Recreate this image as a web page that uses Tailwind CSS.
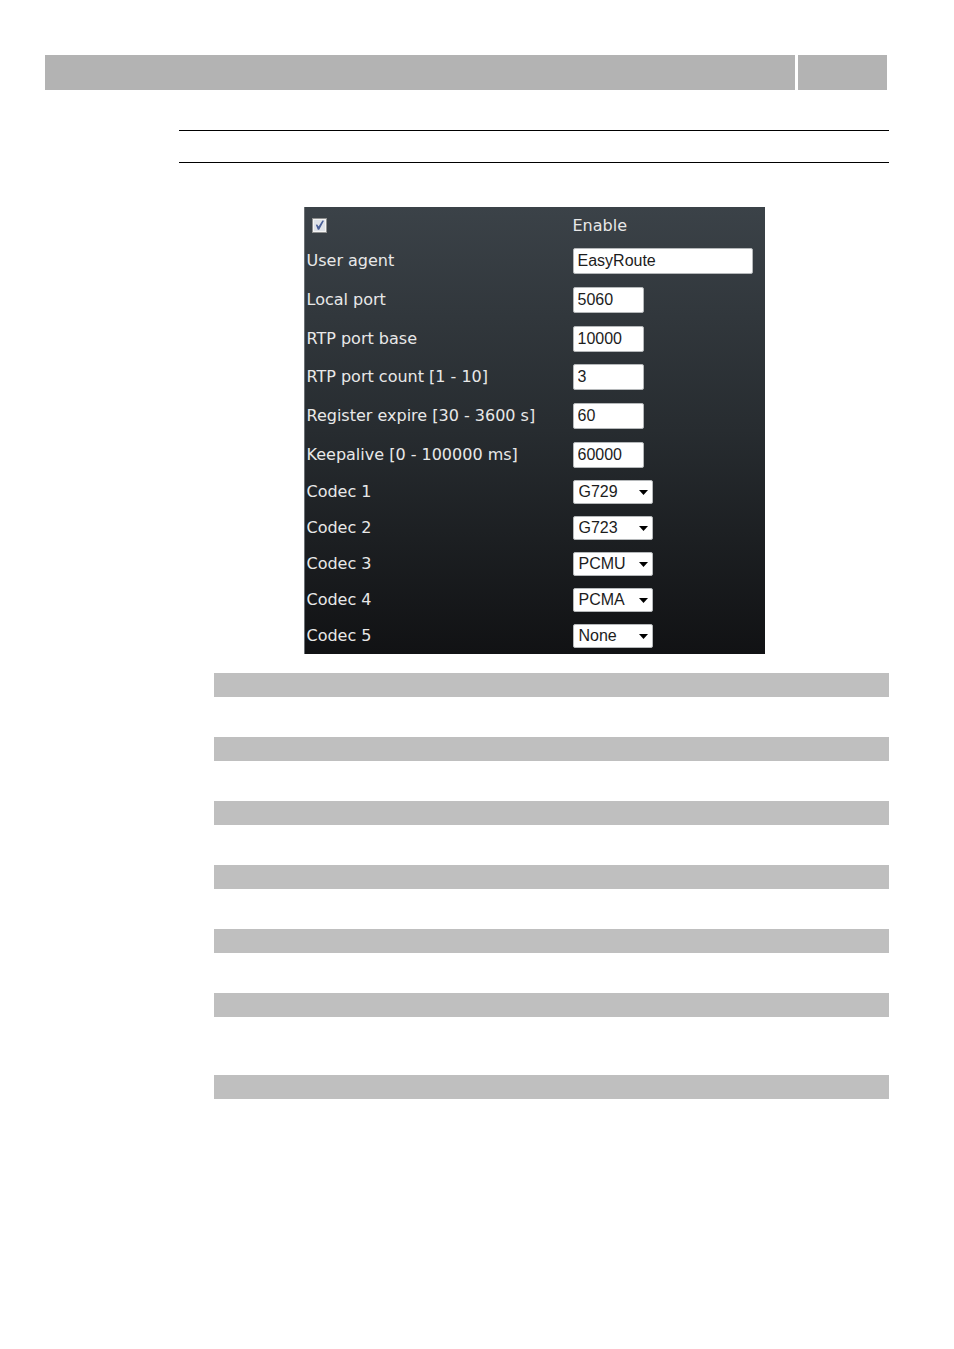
<!doctype html>
<html lang="en">
<head>
    <meta charset="UTF-8">
    <meta name="viewport" content="width=device-width, initial-scale=1.0">
    <title>SIP settings</title>
    <script src="https://cdn.jsdelivr.net/npm/@tailwindcss/browser@4"></script>
</head>
<body class="bg-white pt-[55px] pb-16">
<header class="flex gap-[3px] h-[35px] ml-[45px] mr-[67px]">
    <div class="flex-1 bg-[#b3b3b3]"></div>
    <div class="w-[89px] bg-[#b3b3b3]"></div>
</header>

<main class="mt-10 ml-[179px] mr-[65px]">
    <div class="h-[33px] border-y border-black"></div>

    <form class="mt-11 mx-auto max-w-[461px] pl-[2px] border-l border-[#6b7074] bg-linear-to-b from-[#3b4248] via-[#272c30] to-[#111214] font-['DejaVu_Sans',sans-serif] text-base text-[#e8e8e8]">
        <div class="flex items-center h-[35px] pt-[2px]">
            <div class="w-[266px] pl-[5px]">
                <input type="checkbox" id="enable" checked class="peer sr-only">
                <label for="enable" aria-label="Enable" class="block size-[15px] border border-[#8e8f8f] bg-[#f4f4f4] p-px [&_path]:opacity-0 peer-checked:[&_path]:opacity-100">
                    <svg viewBox="0 0 11 11" class="size-[11px]">
                        <rect width="11" height="11" fill="#dfe2e8"/>
                        <path d="M1.8 4.8 3.2 4.4 4.6 6.6 8.4 .6 10 .8 5.2 9.8 3.8 9.8z" fill="#4a5f97"/>
                    </svg>
                </label>
            </div>
            <label for="enable">Enable</label>
        </div>

        <!-- text fields -->
        <div class="grid grid-rows-6 h-[232px]">
            <div class="flex items-center">
                <label for="agent" class="w-[266px]">User agent</label>
                <input id="agent" value="EasyRoute" class="w-[180px] h-[26px] px-1 border border-[#b5b8ba] rounded-xs bg-white font-['Liberation_Sans',sans-serif] text-base text-[#1c1c1c]">
            </div>
            <div class="flex items-center">
                <label for="local-port" class="w-[266px]">Local port</label>
                <input id="local-port" value="5060" class="w-[71px] h-[26px] px-1 border border-[#b5b8ba] rounded-xs bg-white font-['Liberation_Sans',sans-serif] text-base text-[#1c1c1c]">
            </div>
            <div class="flex items-center">
                <label for="rtp-base" class="w-[266px]">RTP port base</label>
                <input id="rtp-base" value="10000" class="w-[71px] h-[26px] px-1 border border-[#b5b8ba] rounded-xs bg-white font-['Liberation_Sans',sans-serif] text-base text-[#1c1c1c]">
            </div>
            <div class="flex items-center">
                <label for="rtp-count" class="w-[266px]">RTP port count [1 - 10]</label>
                <input id="rtp-count" value="3" class="w-[71px] h-[26px] px-1 border border-[#b5b8ba] rounded-xs bg-white font-['Liberation_Sans',sans-serif] text-base text-[#1c1c1c]">
            </div>
            <div class="flex items-center">
                <label for="expire" class="w-[266px]">Register expire [30 - 3600 s]</label>
                <input id="expire" value="60" class="w-[71px] h-[26px] px-1 border border-[#b5b8ba] rounded-xs bg-white font-['Liberation_Sans',sans-serif] text-base text-[#1c1c1c]">
            </div>
            <div class="flex items-center">
                <label for="keepalive" class="w-[266px]">Keepalive [0 - 100000 ms]</label>
                <input id="keepalive" value="60000" class="w-[71px] h-[26px] px-1 border border-[#b5b8ba] rounded-xs bg-white font-['Liberation_Sans',sans-serif] text-base text-[#1c1c1c]">
            </div>
        </div>

        <!-- codecs -->
        <div class="grid grid-rows-5 h-[180px]">
            <div class="flex items-center">
                <label for="codec1" class="w-[266px]">Codec 1</label>
                <div class="relative">
                    <select id="codec1" class="block appearance-none w-20 h-6 pl-[5px] border border-[#b5b8ba] rounded-xs bg-white font-['Liberation_Sans',sans-serif] text-base leading-[22px] text-[#1c1c1c]">
                        <option selected>G729</option><option>G723</option><option>PCMU</option><option>PCMA</option><option>None</option>
                    </select>
                    <svg viewBox="0 0 9 5" class="absolute right-[5px] top-[10px] w-[9px] h-[5px] pointer-events-none"><path d="M0 0h9L4.5 5z" fill="#000"/></svg>
                </div>
            </div>
            <div class="flex items-center">
                <label for="codec2" class="w-[266px]">Codec 2</label>
                <div class="relative">
                    <select id="codec2" class="block appearance-none w-20 h-6 pl-[5px] border border-[#b5b8ba] rounded-xs bg-white font-['Liberation_Sans',sans-serif] text-base leading-[22px] text-[#1c1c1c]">
                        <option>G729</option><option selected>G723</option><option>PCMU</option><option>PCMA</option><option>None</option>
                    </select>
                    <svg viewBox="0 0 9 5" class="absolute right-[5px] top-[10px] w-[9px] h-[5px] pointer-events-none"><path d="M0 0h9L4.5 5z" fill="#000"/></svg>
                </div>
            </div>
            <div class="flex items-center">
                <label for="codec3" class="w-[266px]">Codec 3</label>
                <div class="relative">
                    <select id="codec3" class="block appearance-none w-20 h-6 pl-[5px] border border-[#b5b8ba] rounded-xs bg-white font-['Liberation_Sans',sans-serif] text-base leading-[22px] text-[#1c1c1c]">
                        <option>G729</option><option>G723</option><option selected>PCMU</option><option>PCMA</option><option>None</option>
                    </select>
                    <svg viewBox="0 0 9 5" class="absolute right-[5px] top-[10px] w-[9px] h-[5px] pointer-events-none"><path d="M0 0h9L4.5 5z" fill="#000"/></svg>
                </div>
            </div>
            <div class="flex items-center">
                <label for="codec4" class="w-[266px]">Codec 4</label>
                <div class="relative">
                    <select id="codec4" class="block appearance-none w-20 h-6 pl-[5px] border border-[#b5b8ba] rounded-xs bg-white font-['Liberation_Sans',sans-serif] text-base leading-[22px] text-[#1c1c1c]">
                        <option>G729</option><option>G723</option><option>PCMU</option><option selected>PCMA</option><option>None</option>
                    </select>
                    <svg viewBox="0 0 9 5" class="absolute right-[5px] top-[10px] w-[9px] h-[5px] pointer-events-none"><path d="M0 0h9L4.5 5z" fill="#000"/></svg>
                </div>
            </div>
            <div class="flex items-center">
                <label for="codec5" class="w-[266px]">Codec 5</label>
                <div class="relative">
                    <select id="codec5" class="block appearance-none w-20 h-6 pl-[5px] border border-[#b5b8ba] rounded-xs bg-white font-['Liberation_Sans',sans-serif] text-base leading-[22px] text-[#1c1c1c]">
                        <option>G729</option><option>G723</option><option>PCMU</option><option>PCMA</option><option selected>None</option>
                    </select>
                    <svg viewBox="0 0 9 5" class="absolute right-[5px] top-[10px] w-[9px] h-[5px] pointer-events-none"><path d="M0 0h9L4.5 5z" fill="#000"/></svg>
                </div>
            </div>
        </div>
    </form>

    <!-- section bars -->
    <div class="mt-[19px] ml-[35px] flex flex-col gap-10">
        <div class="h-6 bg-[#bfbfbf]"></div>
        <div class="h-6 bg-[#bfbfbf]"></div>
        <div class="h-6 bg-[#bfbfbf]"></div>
        <div class="h-6 bg-[#bfbfbf]"></div>
        <div class="h-6 bg-[#bfbfbf]"></div>
        <div class="h-6 bg-[#bfbfbf]"></div>
        <div class="mt-[18px] h-6 bg-[#bfbfbf]"></div>
    </div>
</main>
</body>
</html>
